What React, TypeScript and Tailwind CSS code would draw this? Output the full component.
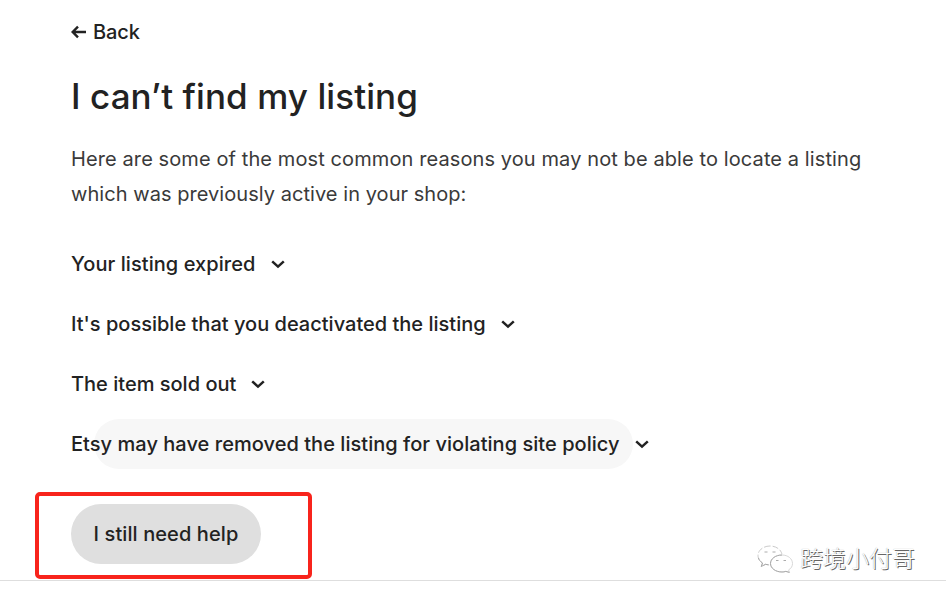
import clsx from 'clsx'

const reasons = [
  { label: 'Your listing expired', tracking: 'tracking-[0.07px]', hovered: false },
  { label: "It's possible that you deactivated the listing", tracking: 'tracking-[0.01px]', hovered: false },
  { label: 'The item sold out', tracking: 'tracking-[0.01px]', hovered: false },
  { label: 'Etsy may have removed the listing for violating site policy', tracking: 'tracking-[0.04px]', hovered: true },
]

function BackArrow() {
  return (
    <svg className="w-4 h-4" viewBox="0 0 16 16" fill="none" stroke="currentColor" strokeWidth="2.4">
      <path d="M15 8H2M7 2.700 1.700 8 7 13.300" />
    </svg>
  )
}

function Chevron() {
  return (
    <svg className="w-3.5 h-2.5 shrink-0" viewBox="0 0 14 10" fill="none" stroke="currentColor" strokeWidth="2.5">
      <path d="M1.200 2.300 7 7.600l5.800-5.300" />
    </svg>
  )
}

function ChatLogo() {
  return (
    <svg className="w-9 h-7 shrink-0" viewBox="0 0 36 28" fill="#fff" stroke="#a3a3a3" strokeWidth="0.9">
      <path stroke="#c4c4c4" strokeDasharray="6 2" d="M13 1C6.400 1 1 5.200 1 10.500c0 3.200 1.700 5.700 4.500 7.500L4.300 21.500l4.200-2.200c1.500.4 3 .7 4.500.7 6.600 0 12-4.200 12-9.500S19.600 1 13 1z" />
      <path stroke="none" d="M25 9c-6.500 0-12 4-12 9.500S18 28 25 28s11-4 11-9.500S31 9 25 9z" />
      <path stroke="#d4d4d4" d="M25 10c-6.500 0-11.500 3.800-11.500 8.500S18.500 27 25 27c1.300 0 2.600-.2 3.800-.6l3.700 1-.9-2.500c2.700-1.500 3.900-3.800 3.900-6.400 0-4.700-4.500-8.500-10.500-8.500z" />
      <path fill="none" d="M25 10c-6.500 0-11.500 3.800-11.500 8.500S18.500 27 25 27c1.300 0 2.600-.2 3.800-.6l3.700 1" />
      <path fill="none" d="M1.500 13c.5 2 2 3.700 4 5L4.300 21.500l4.200-2.200 3 .5" />
      <path d="M7.500 7h3M15.500 7h3M19 15.500h2.500M26.500 15.500H29" />
    </svg>
  )
}

export default function App() {
  return (
    <div className="relative h-[601px] overflow-hidden bg-white font-['Inter',sans-serif] text-[#222]">
      <main className="h-[581px] border-b border-[#dedede] pl-[71px] pt-4">
        <a href="#" className="flex h-8 w-fit items-center gap-1.5 text-[20px] font-medium">
          <BackArrow />
          <span className="tracking-[-0.1px]">Back</span>
        </a>

        <h1 className="mt-6 h-12 w-fit whitespace-nowrap text-[35px] leading-[48px] font-medium tracking-[0.08px]">I can’t find my listing</h1>

        <p className="mt-[22px] whitespace-nowrap text-[20px] leading-[35px] text-[#3a3a3a]">
          <span className="tracking-[0.1px]">Here are some of the most common reasons you may not be able to locate a listing</span>
          <br />
          <span className="tracking-[0.05px]">which was previously active in your shop:</span>
        </p>

        {/* Reasons */}
        <div className="mt-[22px]">
          {reasons.map(({ label, tracking, hovered }) => (
            <button key={label} className="relative flex h-[60px] w-fit items-center gap-[15px] text-[20px] font-medium">
              {hovered && <span className="absolute left-[23px] right-[16px] top-[5px] h-[50px] rounded-full bg-[#f7f7f7]" />}
              <span className={clsx('relative whitespace-nowrap', tracking)}>{label}</span>
              <Chevron />
            </button>
          ))}
        </div>

        {/* Highlighted action */}
        <div className="mt-[18px] -ml-9 h-[87px] w-[277px] rounded-[5px] border-4 border-[#f8241c] pl-8 pt-2">
          <button className="h-[60px] w-[190px] rounded-full bg-[#dfdfdf] text-[20px] font-medium">
            <span className="tracking-[0.1px]">I still need help</span>
          </button>
        </div>
      </main>

      <div className="absolute left-[757px] top-[545px] flex items-center gap-[7px]">
        <ChatLogo />
        <span className="-mt-1 whitespace-nowrap font-['Noto_Sans_CJK_SC',sans-serif] text-[23px] leading-[30px] font-light text-white [text-shadow:1px_1px_0_#666,0_0_1px_#999]">跨境小付哥</span>
      </div>
    </div>
  )
}
